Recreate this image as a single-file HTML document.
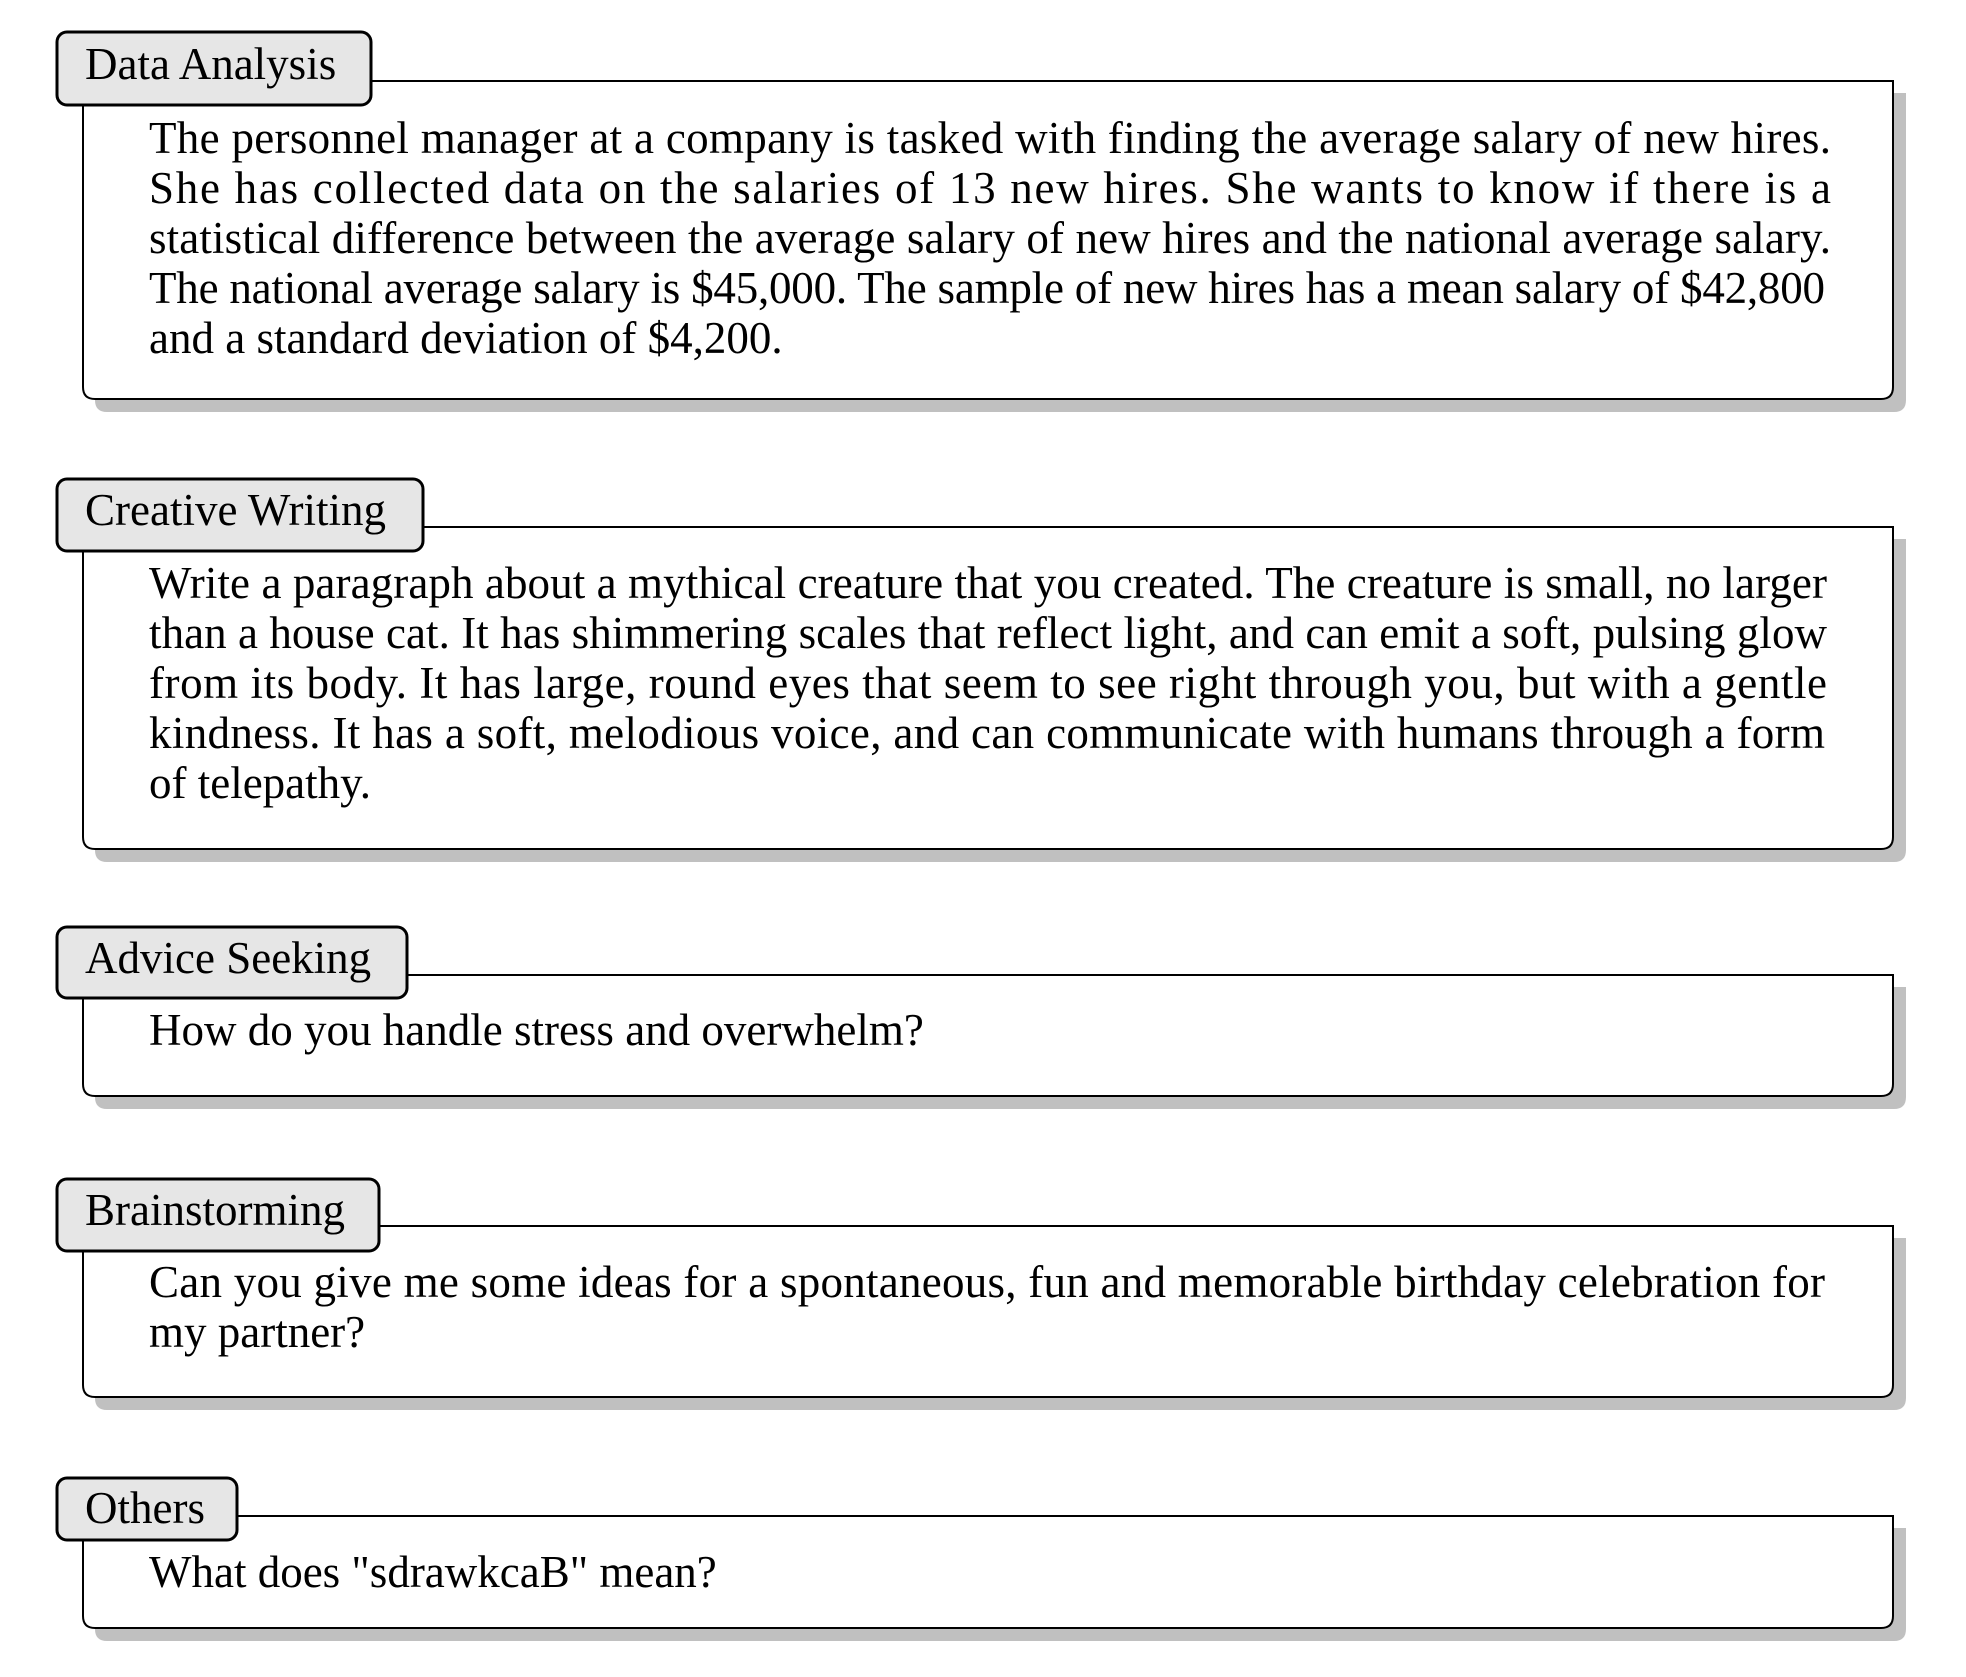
<!DOCTYPE html>
<html><head><meta charset="utf-8"><style>
html,body{margin:0;padding:0;background:#fff;}
svg{display:block;}
text{font-family:"Liberation Serif","Times New Roman",serif;font-size:45px;fill:#000;}
</style></head><body>
<svg width="1966" height="1677" viewBox="0 0 1966 1677" xmlns="http://www.w3.org/2000/svg">
<g id="b1">
<path d="M95 93 H1906 V400 Q1906 412 1894 412 H107 Q95 412 95 400 Z" fill="#c0c0c0"/>
<path d="M83 81 H1893 V387 Q1893 399 1881 399 H95 Q83 399 83 387 Z" fill="#fff" stroke="#000" stroke-width="2"/>
<rect x="57" y="32" width="314" height="73" rx="10" fill="#e6e6e6" stroke="#000" stroke-width="3"/>
<text x="85" y="79">Data Analysis</text>
<text x="149" y="153" textLength="1682" lengthAdjust="spacing">The personnel manager at a company is tasked with finding the average salary of new hires.</text>
<text x="149" y="203" textLength="1682" lengthAdjust="spacing">She has collected data on the salaries of 13 new hires.  She wants to know if there is a</text>
<text x="149" y="253" textLength="1682" lengthAdjust="spacing">statistical difference between the average salary of new hires and the national average salary.</text>
<text x="149" y="303" textLength="1676" lengthAdjust="spacing">The national average salary is $45,000. The sample of new hires has a mean salary of $42,800</text>
<text x="149" y="353">and a standard deviation of $4,200.</text>
</g>
<g id="b2">
<path d="M95 539 H1906 V850 Q1906 862 1894 862 H107 Q95 862 95 850 Z" fill="#c0c0c0"/>
<path d="M83 527 H1893 V837 Q1893 849 1881 849 H95 Q83 849 83 837 Z" fill="#fff" stroke="#000" stroke-width="2"/>
<rect x="57" y="479" width="366" height="72" rx="10" fill="#e6e6e6" stroke="#000" stroke-width="3"/>
<text x="85" y="525">Creative Writing</text>
<text x="149" y="598" textLength="1678" lengthAdjust="spacing">Write a paragraph about a mythical creature that you created. The creature is small, no larger</text>
<text x="149" y="648" textLength="1678" lengthAdjust="spacing">than a house cat. It has shimmering scales that reflect light, and can emit a soft, pulsing glow</text>
<text x="149" y="698" textLength="1678" lengthAdjust="spacing">from its body. It has large, round eyes that seem to see right through you, but with a gentle</text>
<text x="149" y="748" textLength="1676" lengthAdjust="spacing">kindness. It has a soft, melodious voice, and can communicate with humans through a form</text>
<text x="149" y="798">of telepathy.</text>
</g>
<g id="b3">
<path d="M95 987 H1906 V1097 Q1906 1109 1894 1109 H107 Q95 1109 95 1097 Z" fill="#c0c0c0"/>
<path d="M83 975 H1893 V1084 Q1893 1096 1881 1096 H95 Q83 1096 83 1084 Z" fill="#fff" stroke="#000" stroke-width="2"/>
<rect x="57" y="927" width="350" height="71" rx="10" fill="#e6e6e6" stroke="#000" stroke-width="3"/>
<text x="85" y="973">Advice Seeking</text>
<text x="149" y="1045">How do you handle stress and overwhelm?</text>
</g>
<g id="b4">
<path d="M95 1238 H1906 V1398 Q1906 1410 1894 1410 H107 Q95 1410 95 1398 Z" fill="#c0c0c0"/>
<path d="M83 1226 H1893 V1385 Q1893 1397 1881 1397 H95 Q83 1397 83 1385 Z" fill="#fff" stroke="#000" stroke-width="2"/>
<rect x="57" y="1179" width="322" height="72" rx="10" fill="#e6e6e6" stroke="#000" stroke-width="3"/>
<text x="85" y="1225">Brainstorming</text>
<text x="149" y="1297" textLength="1676" lengthAdjust="spacing">Can you give me some ideas for a spontaneous, fun and memorable birthday celebration for</text>
<text x="149" y="1347">my partner?</text>
</g>
<g id="b5">
<path d="M95 1528 H1906 V1629 Q1906 1641 1894 1641 H107 Q95 1641 95 1629 Z" fill="#c0c0c0"/>
<path d="M83 1516 H1893 V1616 Q1893 1628 1881 1628 H95 Q83 1628 83 1616 Z" fill="#fff" stroke="#000" stroke-width="2"/>
<rect x="57" y="1478" width="180" height="62" rx="10" fill="#e6e6e6" stroke="#000" stroke-width="3"/>
<text x="85" y="1523">Others</text>
<text x="149" y="1587">What does "sdrawkcaB" mean?</text>
</g>
</svg>
</body></html>
